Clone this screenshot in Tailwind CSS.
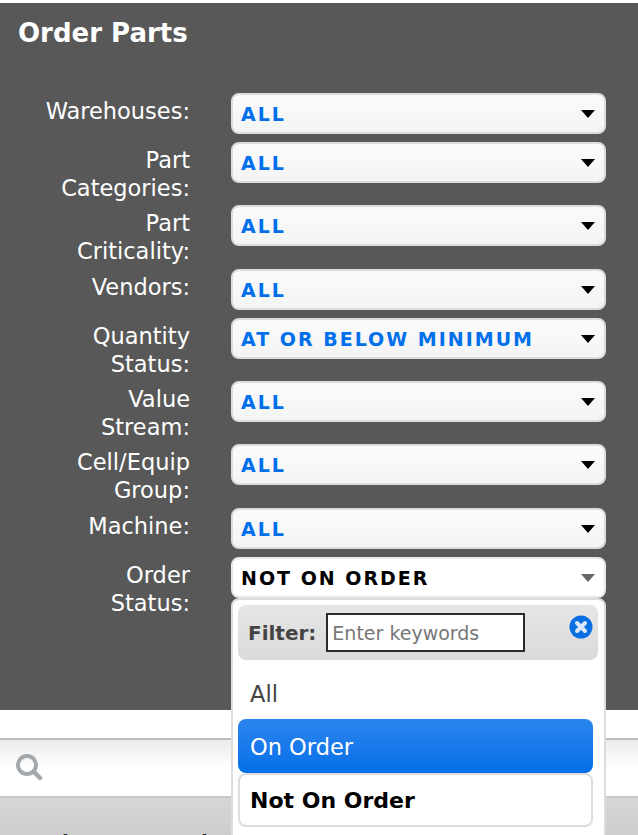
<!DOCTYPE html>
<html><head><meta charset="utf-8"><script src="https://cdn.jsdelivr.net/npm/@tailwindcss/browser@4"></script></head>
<body class="bg-white font-['DejaVu_Sans',sans-serif] overflow-hidden">
<div class="relative h-[835px] w-[638px] overflow-hidden pt-[3px]">
  <div class="h-[707px] bg-[#585858] pt-[15px]">
    <h1 class="pl-[18px] text-[26px] leading-[30px] font-bold text-white">Order Parts</h1>
    <div class="mt-[45px] flex flex-col gap-[8px] pl-[44px] pr-[32px]">
      <div class="flex h-[41px] gap-[41px]"><div class="w-[146px] pt-[4px] text-right text-[22.5px] leading-[28px] text-white">Warehouses:</div><div class="flex h-[41px] w-[375px] items-center justify-between rounded-[8px] border-2 border-[#dcdcdc] bg-gradient-to-b from-[#fbfbfb] to-[#f4f4f4] pl-[8px] pr-[9px]"><span class="pt-[1px] text-[19px] font-bold tracking-[2px] text-[#0070ea]">ALL</span><span class="h-0 w-0 border-x-[7.5px] border-t-[8px] border-x-transparent border-t-black"></span></div></div>
      <div class="flex h-[55px] gap-[41px]"><div class="w-[146px] pt-[4px] text-right text-[22.5px] leading-[28px] text-white">Part Categories:</div><div class="flex h-[41px] w-[375px] items-center justify-between rounded-[8px] border-2 border-[#dcdcdc] bg-gradient-to-b from-[#fbfbfb] to-[#f4f4f4] pl-[8px] pr-[9px]"><span class="pt-[1px] text-[19px] font-bold tracking-[2px] text-[#0070ea]">ALL</span><span class="h-0 w-0 border-x-[7.5px] border-t-[8px] border-x-transparent border-t-black"></span></div></div>
      <div class="flex h-[56px] gap-[41px]"><div class="w-[146px] pt-[4px] text-right text-[22.5px] leading-[28px] text-white">Part Criticality:</div><div class="flex h-[41px] w-[375px] items-center justify-between rounded-[8px] border-2 border-[#dcdcdc] bg-gradient-to-b from-[#fbfbfb] to-[#f4f4f4] pl-[8px] pr-[9px]"><span class="pt-[1px] text-[19px] font-bold tracking-[2px] text-[#0070ea]">ALL</span><span class="h-0 w-0 border-x-[7.5px] border-t-[8px] border-x-transparent border-t-black"></span></div></div>
      <div class="flex h-[41px] gap-[41px]"><div class="w-[146px] pt-[4px] text-right text-[22.5px] leading-[28px] text-white">Vendors:</div><div class="flex h-[41px] w-[375px] items-center justify-between rounded-[8px] border-2 border-[#dcdcdc] bg-gradient-to-b from-[#fbfbfb] to-[#f4f4f4] pl-[8px] pr-[9px]"><span class="pt-[1px] text-[19px] font-bold tracking-[2px] text-[#0070ea]">ALL</span><span class="h-0 w-0 border-x-[7.5px] border-t-[8px] border-x-transparent border-t-black"></span></div></div>
      <div class="flex h-[55px] gap-[41px]"><div class="w-[146px] pt-[4px] text-right text-[22.5px] leading-[28px] text-white">Quantity Status:</div><div class="flex h-[41px] w-[375px] items-center justify-between rounded-[8px] border-2 border-[#dcdcdc] bg-gradient-to-b from-[#fbfbfb] to-[#f4f4f4] pl-[8px] pr-[9px]"><span class="pt-[1px] text-[19px] font-bold tracking-[2px] text-[#0070ea]">AT OR BELOW MINIMUM</span><span class="h-0 w-0 border-x-[7.5px] border-t-[8px] border-x-transparent border-t-black"></span></div></div>
      <div class="flex h-[55px] gap-[41px]"><div class="w-[146px] pt-[4px] text-right text-[22.5px] leading-[28px] text-white">Value Stream:</div><div class="flex h-[41px] w-[375px] items-center justify-between rounded-[8px] border-2 border-[#dcdcdc] bg-gradient-to-b from-[#fbfbfb] to-[#f4f4f4] pl-[8px] pr-[9px]"><span class="pt-[1px] text-[19px] font-bold tracking-[2px] text-[#0070ea]">ALL</span><span class="h-0 w-0 border-x-[7.5px] border-t-[8px] border-x-transparent border-t-black"></span></div></div>
      <div class="flex h-[56px] gap-[41px]"><div class="w-[146px] pt-[4px] text-right text-[22.5px] leading-[28px] text-white">Cell/Equip Group:</div><div class="flex h-[41px] w-[375px] items-center justify-between rounded-[8px] border-2 border-[#dcdcdc] bg-gradient-to-b from-[#fbfbfb] to-[#f4f4f4] pl-[8px] pr-[9px]"><span class="pt-[1px] text-[19px] font-bold tracking-[2px] text-[#0070ea]">ALL</span><span class="h-0 w-0 border-x-[7.5px] border-t-[8px] border-x-transparent border-t-black"></span></div></div>
      <div class="flex h-[41px] gap-[41px]"><div class="w-[146px] pt-[4px] text-right text-[22.5px] leading-[28px] text-white">Machine:</div><div class="flex h-[41px] w-[375px] items-center justify-between rounded-[8px] border-2 border-[#dcdcdc] bg-gradient-to-b from-[#fbfbfb] to-[#f4f4f4] pl-[8px] pr-[9px]"><span class="pt-[1px] text-[19px] font-bold tracking-[2px] text-[#0070ea]">ALL</span><span class="h-0 w-0 border-x-[7.5px] border-t-[8px] border-x-transparent border-t-black"></span></div></div>
      <div class="flex h-[55px] gap-[41px]"><div class="w-[146px] pt-[4px] text-right text-[22.5px] leading-[28px] text-white">Order Status:</div><div class="flex h-[41px] w-[375px] items-center justify-between rounded-[8px] border-2 border-[#e8e8e8] bg-white pl-[8px] pr-[9px]"><span class="pt-[1px] text-[19px] font-bold tracking-[2px] text-black">NOT ON ORDER</span><span class="h-0 w-0 border-x-[7.5px] border-t-[8px] border-x-transparent border-t-[#666]"></span></div></div>
    </div>
  </div>
  <div class="mt-[28px] border-t-2 border-[#bdbdbd]">
    <div class="flex h-[58px] items-center border-b-2 border-[#c8c8c8] bg-gradient-to-b from-[#ececec] via-white to-white pb-[2px] pl-[15px]">
      <svg width="28" height="28" viewBox="0 0 28 28" fill="none" stroke="#a3a8ad" stroke-linecap="round"><circle cx="12" cy="12" r="9" stroke-width="4"/><path d="M18.5 18.5 L25 25" stroke-width="4.5"/></svg>
    </div>
    <div class="h-[60px] bg-gradient-to-b from-[#d6d6d6] to-[#c8c8c8] pl-[16px] pt-[30px] text-[20px] font-bold leading-[28px] tracking-[3px] text-[#222]">Action Accord</div>
  </div>
  <div class="absolute left-[231px] top-[598px] h-[260px] w-[375px] rounded-[8px] border-2 border-[#dcdcdc] bg-white p-[5px]">
    <div class="relative flex h-[55px] w-[360px] items-center gap-[10px] rounded-[8px] bg-gradient-to-b from-[#e6e6e6] to-[#dadada] pl-[10px]">
      <span class="pt-[1px] text-[20px] font-bold text-[#444]">Filter:</span>
      <input class="h-[39px] w-[199px] border-2 border-[#2a2a2a] bg-white px-[4px] text-[19px] text-[#333] placeholder:text-[#777]" placeholder="Enter keywords">
      <svg class="absolute right-[5px] top-[10px]" width="24" height="24" viewBox="0 0 24 24"><circle cx="12" cy="12" r="11.5" fill="#0b6fe4"/><path d="M8 8 L16 16 M16 8 L8 16" stroke="#dbe7f5" stroke-width="4" stroke-linecap="round"/></svg>
    </div>
    <div class="mt-[14px] pl-[12px] text-[22.5px] leading-[40px] text-[#444]">All</div>
    <div class="mt-[5px] flex h-[54px] w-[355px] items-center rounded-[8px] bg-gradient-to-b from-[#2a84ee] to-[#0070e8] pl-[12px] pt-[3px] text-[22.5px] text-white">On Order</div>
    <div class="flex h-[54px] w-[355px] items-center rounded-[8px] border-2 border-[#dcdcdc] bg-white pl-[10px] pt-[1px] text-[22px] font-bold text-black">Not On Order</div>
  </div>
</div>
</body></html>
